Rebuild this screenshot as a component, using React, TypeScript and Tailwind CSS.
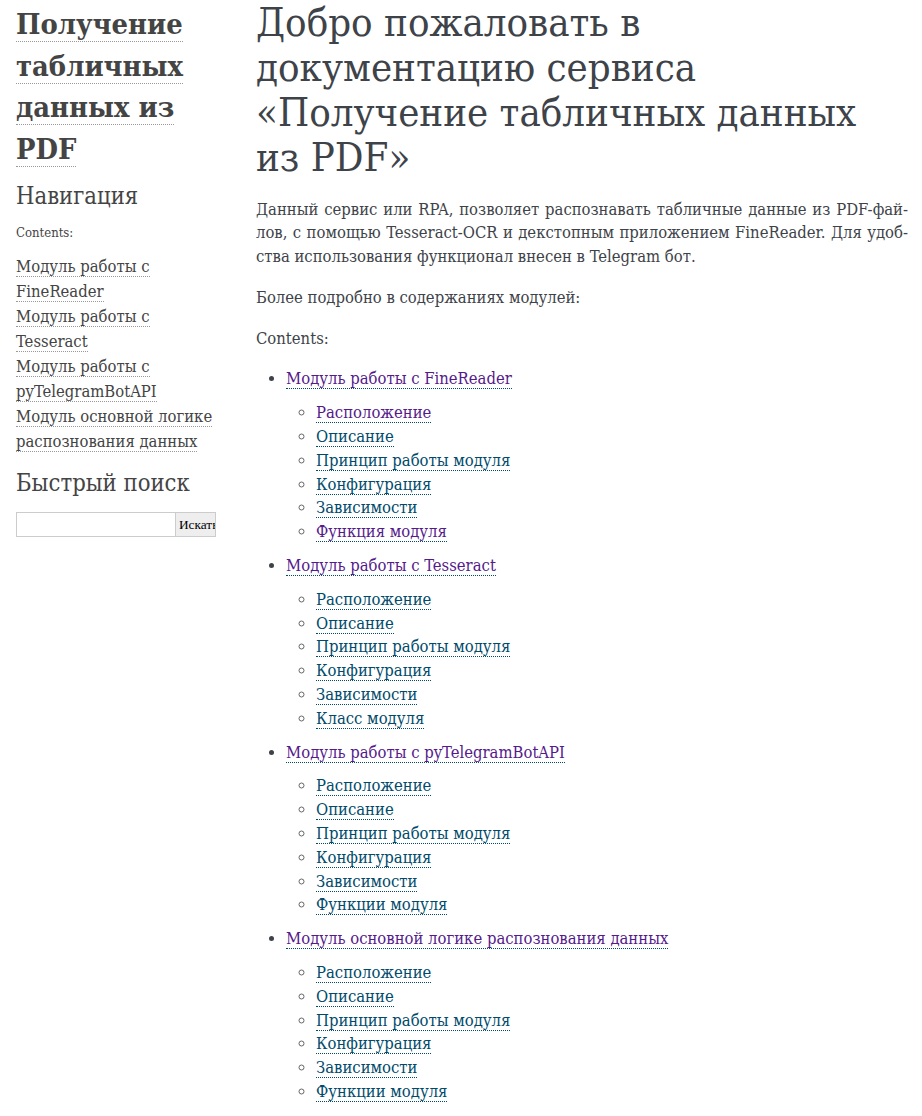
import React from "react";

const serif = "font-['DejaVu_Serif_Condensed','DejaVu_Serif',serif]";

type Item = { t: string; v?: boolean };
const sections: { title: string; items: Item[] }[] = [
  {
    title: "Модуль работы с FineReader",
    items: [
      { t: "Расположение", v: true },
      { t: "Описание" },
      { t: "Принцип работы модуля" },
      { t: "Конфигурация" },
      { t: "Зависимости" },
      { t: "Функция модуля", v: true },
    ],
  },
  {
    title: "Модуль работы с Tesseract",
    items: [
      { t: "Расположение" },
      { t: "Описание" },
      { t: "Принцип работы модуля" },
      { t: "Конфигурация" },
      { t: "Зависимости" },
      { t: "Класс модуля" },
    ],
  },
  {
    title: "Модуль работы с pyTelegramBotAPI",
    items: [
      { t: "Расположение" },
      { t: "Описание" },
      { t: "Принцип работы модуля" },
      { t: "Конфигурация" },
      { t: "Зависимости" },
      { t: "Функции модуля" },
    ],
  },
  {
    title: "Модуль основной логике распознования данных",
    items: [
      { t: "Расположение" },
      { t: "Описание" },
      { t: "Принцип работы модуля" },
      { t: "Конфигурация" },
      { t: "Зависимости" },
      { t: "Функции модуля" },
    ],
  },
];

function Link({ children, visited }: { children: React.ReactNode; visited?: boolean }) {
  return (
    <a
      href="#"
      className={
        visited
          ? "text-[#551A8B] border-b border-dotted border-[#004B6B]"
          : "text-[#004B6B] border-b border-dotted border-[#004B6B]"
      }
    >
      {children}
    </a>
  );
}

function SideLink({ children }: { children: React.ReactNode }) {
  return (
    <a href="#" className="text-[#444] border-b border-dotted border-[#999]">
      {children}
    </a>
  );
}

export default function App() {
  return (
    <div className={`${serif} text-[#3E4349] bg-white min-h-[1116px] flex text-[16.5px] leading-[23.8px]`}>
      <aside className="w-[200px] ml-[16px] shrink-0 pt-[4px] text-[#444]">
        <h1 className="text-[28.8px] font-bold leading-[41.7px]">
          <a href="#" className="border-b border-dotted border-[#999] text-[#444]">
            Получение
            <br />
            табличных
            <br />
            данных из
            <br />
            PDF
          </a>
        </h1>
        <h3 className="text-[23.6px] leading-[30px] mt-[10px]">Навигация</h3>
        <p className="text-[13px] leading-[18px] mt-[13.5px]">Contents:</p>
        <ul className="leading-[25px] text-[16.5px] mt-[12px]">
          <li>
            <SideLink>
              Модуль работы с<br />
              FineReader
            </SideLink>
          </li>
          <li>
            <SideLink>
              Модуль работы с<br />
              Tesseract
            </SideLink>
          </li>
          <li>
            <SideLink>
              Модуль работы с<br />
              pyTelegramBotAPI
            </SideLink>
          </li>
          <li>
            <SideLink>
              Модуль основной логике
              <br />
              распознования данных
            </SideLink>
          </li>
        </ul>
        <h3 className="text-[23.6px] leading-[30px] mt-[14px]">Быстрый поиск</h3>
        <div className="flex mt-[13.5px] w-[200px]">
          <input aria-label="search" className="w-[160px] h-[25px] border border-[#ccc] bg-white" />
          <button className="w-[40px] h-[25px] overflow-hidden whitespace-nowrap text-left pl-[3px] border border-l-0 border-[#ccc] bg-[#eee] text-[13.3px] text-black font-['Liberation_Serif',serif]">
            Искать
          </button>
        </div>
      </aside>
      <main className="ml-[40px] w-[652px] shrink-0">
        <h1 className="text-[39.8px] leading-[45px] font-normal">
          <span className="block">Добро пожаловать в</span>
          <span className="block">документацию сервиса</span>
          <span className="block">«Получение табличных данных</span>
          <span className="block">из PDF»</span>
        </h1>
        <div className="mt-[17.5px] text-justify">
          <span className="block whitespace-nowrap [text-align-last:justify]">
            Данный сервис или RPA, позволяет распознавать табличные данные из PDF-фай-
          </span>
          <span className="block whitespace-nowrap [text-align-last:justify]">
            лов, с помощью Tesseract-OCR и декстопным приложением FineReader. Для удоб-
          </span>
          <span className="block">ства использования функционал внесен в Telegram бот.</span>
        </div>
        <p className="mt-[17px]">Более подробно в содержаниях модулей:</p>
        <p className="mt-[17px]">Contents:</p>
        <ul className="mt-[17px] list-disc pl-[30px] marker:text-[#3E4349]">
          {sections.map((s) => (
            <li key={s.title} className="mb-[10px]">
              <Link visited>{s.title}</Link>
              <ul className="list-[circle] pl-[30px] mt-[10px] marker:text-[#666]">
                {s.items.map((it, i) => (
                  <li key={i}>
                    <Link visited={it.v}>{it.t}</Link>
                  </li>
                ))}
              </ul>
            </li>
          ))}
        </ul>
      </main>
    </div>
  );
}
